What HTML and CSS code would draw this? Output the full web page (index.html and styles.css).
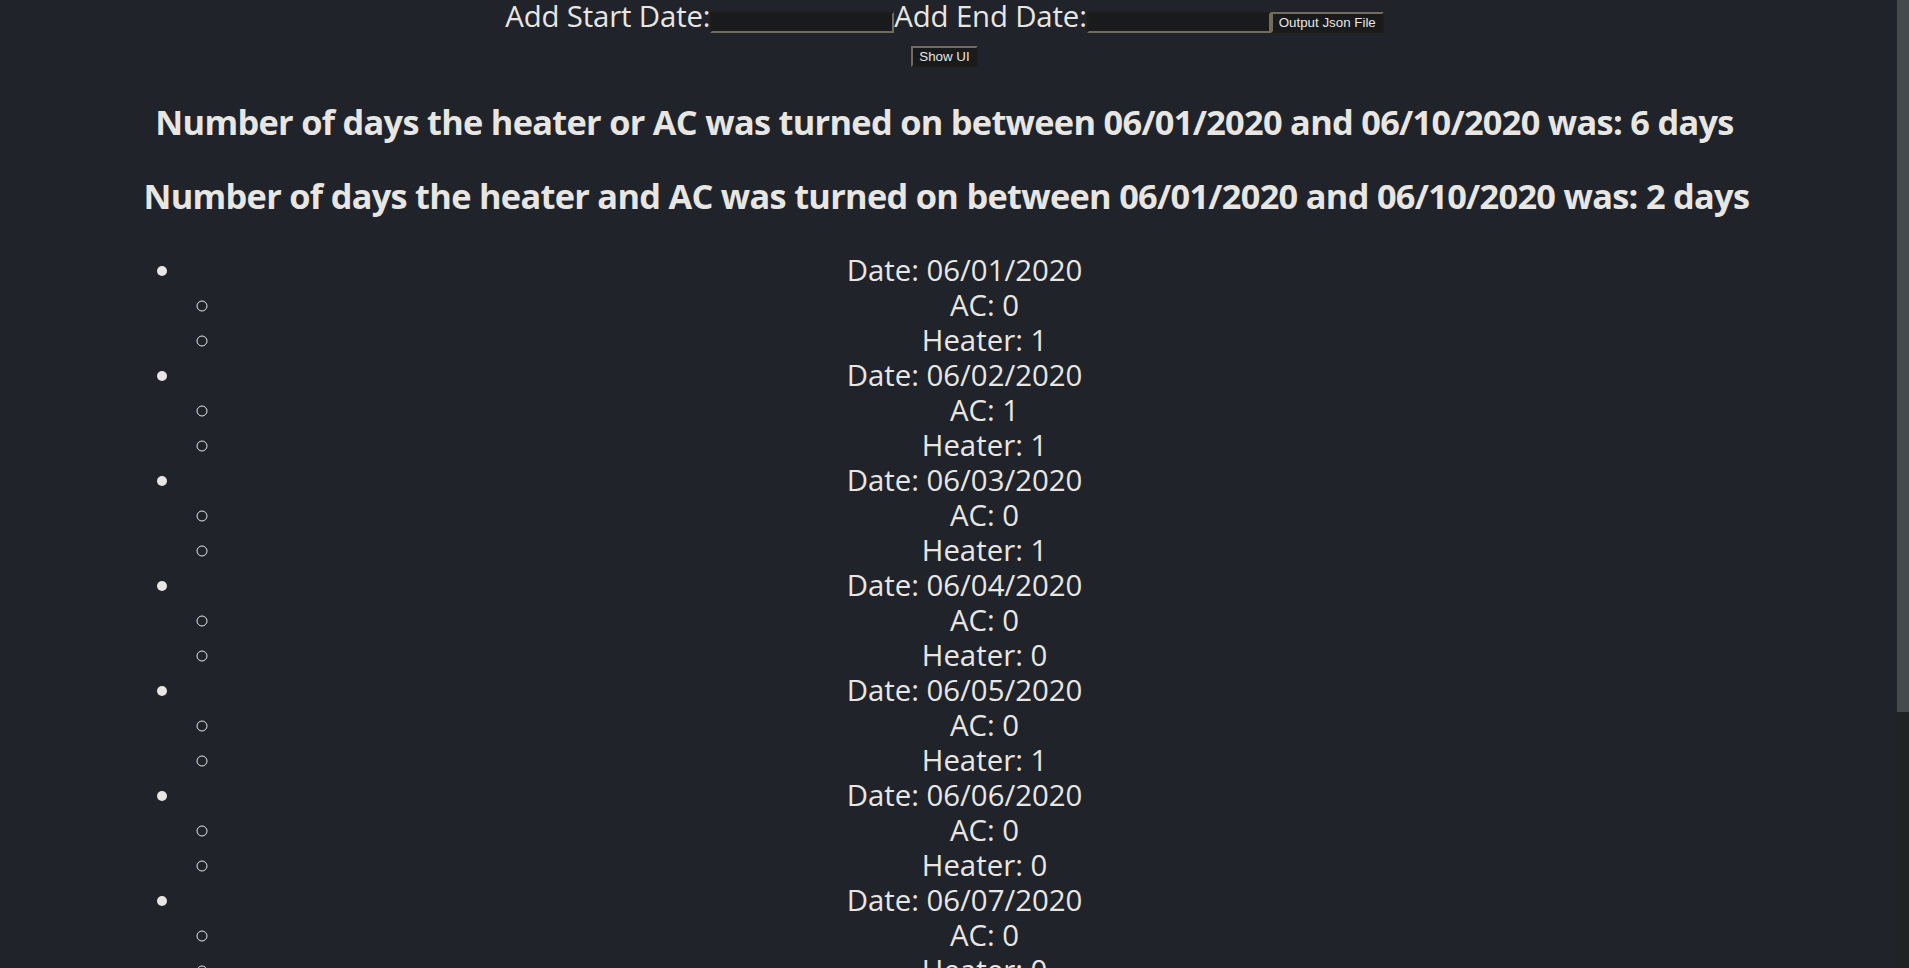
FILE: index.html
```html
<!DOCTYPE html>
<html lang="en">
<head>
<meta charset="utf-8">
<title>Heater / AC Report</title>
<link rel="stylesheet" href="styles.css">
</head>
<body>
<div class="app">
  <header class="controls">Add Start Date:<input type="text" class="field">Add End Date:<input type="text" class="field"><button class="btn">Output Json File</button><br><button class="btn">Show UI</button></header>
  <div class="results">
    <h3 class="summary">Number of days the heater or AC was turned on between 06/01/2020 and 06/10/2020 was: 6 days</h3>
    <h3 class="summary">Number of days the heater and AC was turned on between 06/01/2020 and 06/10/2020 was: 2 days</h3>
    <ul class="days">
      <li>Date: 06/01/2020<ul class="readings"><li>AC: 0</li><li>Heater: 1</li></ul></li>
      <li>Date: 06/02/2020<ul class="readings"><li>AC: 1</li><li>Heater: 1</li></ul></li>
      <li>Date: 06/03/2020<ul class="readings"><li>AC: 0</li><li>Heater: 1</li></ul></li>
      <li>Date: 06/04/2020<ul class="readings"><li>AC: 0</li><li>Heater: 0</li></ul></li>
      <li>Date: 06/05/2020<ul class="readings"><li>AC: 0</li><li>Heater: 1</li></ul></li>
      <li>Date: 06/06/2020<ul class="readings"><li>AC: 0</li><li>Heater: 0</li></ul></li>
      <li>Date: 06/07/2020<ul class="readings"><li>AC: 0</li><li>Heater: 0</li></ul></li>
      <li>Date: 06/08/2020<ul class="readings"><li>AC: 1</li><li>Heater: 1</li></ul></li>
      <li>Date: 06/09/2020<ul class="readings"><li>AC: 1</li><li>Heater: 0</li></ul></li>
      <li>Date: 06/10/2020<ul class="readings"><li>AC: 0</li><li>Heater: 0</li></ul></li>
    </ul>
  </div>
</div>
<div class="scroll-rail"><div class="scroll-thumb"></div></div>
</body>
</html>
```

FILE: styles.css
```css
html,
body {
  height: 100%;
  margin: 0;
  overflow: hidden;
  background: #20232a;
  color-scheme: dark;
}

body {
  display: flex;
  color: #e8e6e3;
  font-family: "Open Sans", "Noto Sans", sans-serif;
  font-size: 29.36px;
  line-height: 1.149;
  text-align: center;
}

.app {
  flex: 1 1 auto;
  min-width: 0;
  height: 100%;
  padding-right: 8px;
  overflow-y: auto;
  scrollbar-width: none;
}

.app::-webkit-scrollbar {
  display: none;
}

.scroll-rail {
  flex: 0 0 12px;
  height: 100%;
  background: #202324;
}

.scroll-thumb {
  height: 712px;
  background: #454a4d;
}

.controls {
  display: block;
  letter-spacing: -0.15px;
}

.field {
  box-sizing: border-box;
  width: 184px;
  height: 21px;
  margin: 0;
  padding: 1px 2px;
  border: 2px inset #736b5e;
  background: #181a1b;
  color: #e8e6e3;
  font-family: "Liberation Sans", Arial, sans-serif;
  font-size: 13.333px;
  letter-spacing: normal;
}

.btn {
  box-sizing: border-box;
  height: 21px;
  margin: 0;
  padding: 1px 6px;
  border: 2px outset #736b5e;
  background: #181a1b;
  color: #e8e6e3;
  font-family: "Liberation Sans", Arial, sans-serif;
  font-size: 13.333px;
  line-height: normal;
  letter-spacing: normal;
}

.results {
  width: 1602px;
  margin: 0 auto;
}

.summary {
  margin: 34.35px 0;
  font-size: 34.35px;
  font-weight: 700;
  line-height: 39.5px;
  letter-spacing: -0.7px;
  white-space: nowrap;
}

.days {
  margin: 38px 0 29.36px;
  padding-left: 40px;
  list-style: disc;
  line-height: 35px;
}

.readings {
  margin: 0;
  padding-left: 40px;
  list-style: circle;
}
```
